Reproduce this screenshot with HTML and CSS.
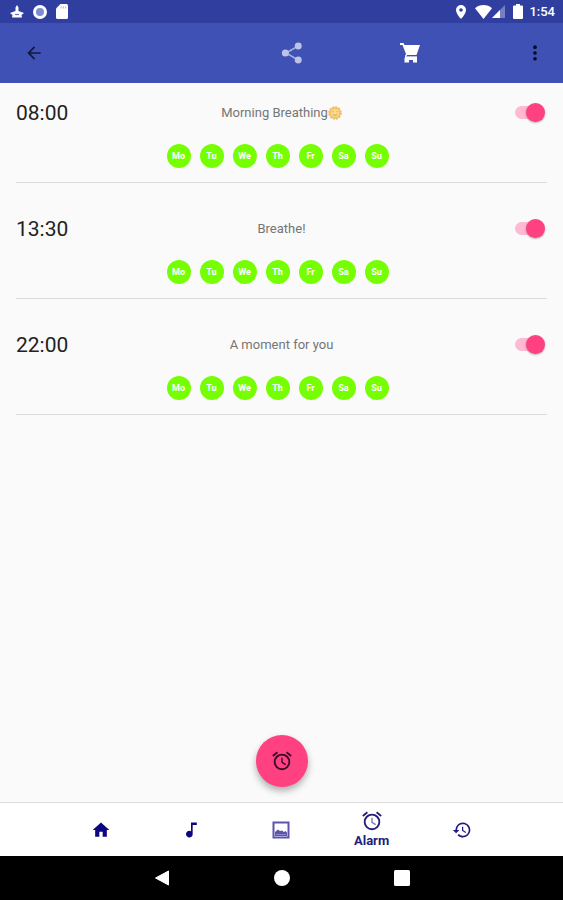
FILE: index.html
```html
<!DOCTYPE html>
<html lang="en">
<head>
    <meta charset="UTF-8">
    <meta name="viewport" content="width=device-width, initial-scale=1.0">
    <title>Alarm</title>
    <link rel="stylesheet" href="styles.css">
</head>
<body>
    <!-- Android status bar -->
    <div class="status-bar">
        <div class="status-group status-left">
            <svg width="14" height="14" viewBox="0 0 14 14" fill="#fff"><path d="M7 0l1.500 2.500v3.500l5.500 2-2.500 2 .5 2.500H2l.5-2.500L0 8l5.500-2V2.500z"/><path d="M5 9.500h4" stroke="#6874bd" stroke-width="1.200"/></svg>
            <svg width="16" height="16" viewBox="0 0 16 16"><circle cx="8" cy="8" r="5.500" fill="#7f8bcb" stroke="#fff" stroke-width="3"/></svg>
            <svg width="12" height="15" viewBox="0 0 12 15"><path d="M4.500 0H10.500Q12 0 12 1.500V13.500Q12 15 10.500 15H1.500Q0 15 0 13.500V4.500z" fill="#fff"/><path d="M5 2.500v2M7.300 2.500v2M9.600 2.500v2" stroke="#a9b0dc"/></svg>
        </div>
        <div class="status-group status-right">
            <svg width="10" height="14" viewBox="0 0 10 14"><path d="M5 0a5 5 0 0 0-5 5c0 3.700 5 9 5 9s5-5.300 5-9a5 5 0 0 0-5-5zm0 6.800a1.800 1.800 0 1 1 0-3.600 1.800 1.800 0 0 1 0 3.600z" fill="#fff"/></svg>
            <svg class="wifi" width="17" height="14" viewBox="0 0 17 14"><path d="M8.500 14L0 3.200C2.300 1.200 5.300 0 8.500 0S14.700 1.200 17 3.200z" fill="#fff"/></svg>
            <svg width="13" height="13" viewBox="0 0 13 13"><path d="M0 13L13 0v13z" fill="#7480c2"/><path d="M0 13l8-8v8z" fill="#fff"/></svg>
            <svg class="battery" width="10" height="15" viewBox="0 0 10 15"><path d="M3 0h4v1.500h2q1 0 1 1V14q0 1-1 1H1q-1 0-1-1V2.500q0-1 1-1h2z" fill="#fff"/></svg>
            <span class="clock">1:54</span>
        </div>
    </div>

    <header class="app-bar">
        <button class="icon-btn back" aria-label="Back">
            <svg width="20" height="20" viewBox="0 0 24 24"><path d="M20 11H7.830l5.590-5.590L12 4l-8 8 8 8 1.410-1.410L7.830 13H20z" fill="#11183f"/></svg>
        </button>
        <button class="icon-btn share" aria-label="Share">
            <svg width="22" height="22" viewBox="0 0 24 24"><path d="M18.500 4.500L5.500 12l13 7.500" fill="none" stroke="#a9b3dd" stroke-width="1.800"/><g fill="#bcc3e6"><circle cx="18.800" cy="4.300" r="3.800"/><circle cx="4.800" cy="12" r="3.900"/><circle cx="18.800" cy="19.700" r="3.800"/></g></svg>
        </button>
        <button class="icon-btn cart" aria-label="Shop">
            <svg width="20" height="20" viewBox="0 0 20 20"><path d="M0 0h3.500l1 2H20l-3.500 10H7L6.500 13.500H17V15H5V13l1-2L2.500 2H0z" fill="#fff"/><path d="M6 13.500h11" stroke="#b4bce4"/><path d="M4.500 15H17v4.500h-4V17H9v2.500H4.500z" fill="#fff"/></svg>
        </button>
        <button class="icon-btn more" aria-label="More options">
            <svg width="20" height="20" viewBox="0 0 24 24" fill="#080b20"><circle cx="12" cy="5" r="2.200"/><circle cx="12" cy="12" r="2.200"/><circle cx="12" cy="19" r="2.200"/></svg>
        </button>
    </header>

    <main>
        <ul class="alarms">
            <li class="alarm">
                <div class="alarm-row">
                    <time class="alarm-time">08:00</time>
                    <label class="alarm-name" for="alarm1">Morning Breathing<svg class="sun" width="14" height="14" viewBox="0 0 14 14"><circle cx="7" cy="7" r="5.800" fill="#f3c46c" stroke="#f0bd63" stroke-width="2" stroke-dasharray="2 1"/><circle cx="7" cy="7" r="4" fill="#fbda8c"/><path d="M5 5.200v1M9 5.200v1M4.800 8.500q2.200 2 4.400 0" fill="none" stroke="#c99a50" stroke-width=".9"/></svg></label>
                    <input type="checkbox" class="switch" id="alarm1" checked>
                </div>
                <div class="days">
                    <button class="day">Mo</button>
                    <button class="day">Tu</button>
                    <button class="day">We</button>
                    <button class="day">Th</button>
                    <button class="day">Fr</button>
                    <button class="day">Sa</button>
                    <button class="day">Su</button>
                </div>
            </li>
            <li class="alarm">
                <div class="alarm-row">
                    <time class="alarm-time">13:30</time>
                    <label class="alarm-name" for="alarm2">Breathe!</label>
                    <input type="checkbox" class="switch" id="alarm2" checked>
                </div>
                <div class="days">
                    <button class="day">Mo</button>
                    <button class="day">Tu</button>
                    <button class="day">We</button>
                    <button class="day">Th</button>
                    <button class="day">Fr</button>
                    <button class="day">Sa</button>
                    <button class="day">Su</button>
                </div>
            </li>
            <li class="alarm">
                <div class="alarm-row">
                    <time class="alarm-time">22:00</time>
                    <label class="alarm-name" for="alarm3">A moment for you</label>
                    <input type="checkbox" class="switch" id="alarm3" checked>
                </div>
                <div class="days">
                    <button class="day">Mo</button>
                    <button class="day">Tu</button>
                    <button class="day">We</button>
                    <button class="day">Th</button>
                    <button class="day">Fr</button>
                    <button class="day">Sa</button>
                    <button class="day">Su</button>
                </div>
            </li>
        </ul>

        <button class="fab" aria-label="Add alarm">
            <svg width="22" height="22" viewBox="0 0 24 24" fill="none" stroke="#3a0b26" stroke-width="2"><circle cx="12" cy="13" r="8"/><path d="M2 6.500l5-4M22 6.500l-5-4"/><path d="M12 8.500v5l4 2.500" stroke-width="1.500"/></svg>
        </button>
    </main>

    <nav class="tabs">
        <a href="#" class="tab" aria-label="Home">
            <svg width="20" height="20" viewBox="0 0 24 24"><path d="M10 20v-6h4v6h5v-8h3L12 3 2 12h3v8z" fill="#0c0680"/></svg>
        </a>
        <a href="#" class="tab" aria-label="Music">
            <svg width="20" height="20" viewBox="0 0 24 24"><path d="M12 3v10.550A4 4 0 1 0 14 17V6h5V3z" fill="#0c0680"/></svg>
        </a>
        <a href="#" class="tab" aria-label="Pictures">
            <svg width="18" height="18" viewBox="0 0 18 18"><path d="M1.500 1.500h15v15h-15z" fill="none" stroke="#5b55b0" stroke-width="2"/><path d="M3 15v-4l3-2.500 2 1.500 2-.5 2 1.500 1.500-1 1.500 1.500V15z" fill="#5b55b0"/><path d="M4 13.500h10" stroke="#8d89c9"/></svg>
        </a>
        <a href="#" class="tab active">
            <svg width="22" height="22" viewBox="0 0 24 24" fill="none" stroke="#241c7c" stroke-width="2"><circle cx="12" cy="13" r="8"/><path d="M2 6.500l5-4M22 6.500l-5-4"/><path d="M12 8.500v5l4 2.500" stroke="#7d79b5" stroke-width="1.500"/></svg>
            <span>Alarm</span>
        </a>
        <a href="#" class="tab" aria-label="History">
            <svg width="20" height="20" viewBox="0 0 24 24"><path d="M13 3a9 9 0 0 0-9 9H1l3.890 3.890.070.140L9 12H6a7 7 0 1 1 2.060 4.940l-1.420 1.420A9 9 0 1 0 13 3zm-1 5v5l4.280 2.540.720-1.210-3.500-2.080V8z" fill="#241c7c"/></svg>
        </a>
    </nav>

    <!-- Android navigation buttons -->
    <div class="system-nav">
        <button class="icon-btn" aria-label="System back">
            <svg width="16" height="16" viewBox="0 0 16 16"><path d="M14.500 1v14L1.500 8z" fill="#fff" stroke="#fff" stroke-linejoin="round"/></svg>
        </button>
        <button class="icon-btn" aria-label="System home">
            <svg width="16" height="16" viewBox="0 0 16 16"><circle cx="8" cy="8" r="8" fill="#fff"/></svg>
        </button>
        <button class="icon-btn" aria-label="Recent apps">
            <svg width="16" height="16" viewBox="0 0 16 16"><rect width="16" height="16" rx="1.500" fill="#fff"/></svg>
        </button>
    </div>
</body>
</html>
```
FILE: styles.css
```css
* {
    margin: 0;
    padding: 0;
    box-sizing: border-box;
}

body {
    display: flex;
    flex-direction: column;
    min-height: 100vh;
    background-color: #fafafa;
    color: #222;
    font-family: Roboto, Arial, sans-serif;
}

button {
    border: none;
    background: none;
    font-family: inherit;
    cursor: pointer;
}

svg {
    display: block;
}

.status-bar {
    display: flex;
    justify-content: space-between;
    align-items: center;
    height: 23px;
    padding: 0 8px 0 10px;
    background-color: #303f9f;
    color: #fff;
}

.status-group {
    display: flex;
    align-items: center;
}

.status-left {
    gap: 8px;
}

.wifi {
    margin-left: 9px;
}

.battery {
    margin: 0 6px 0 8px;
}

.clock {
    font-size: 13px;
    font-weight: 500;
    line-height: 24px;
}

.app-bar {
    display: grid;
    grid-template-columns: 68px 1fr 21% 21% 94px;
    align-items: center;
    height: 60px;
    background-color: #3f51b5;
}

.icon-btn {
    display: flex;
    justify-content: center;
    align-items: center;
    height: 44px;
}

.share {
    grid-column: 3;
}

.more {
    justify-content: flex-end;
    padding-right: 18px;
}

main {
    position: relative;
    flex: 1;
    padding: 0 16px 90px;
}

.alarms {
    display: flex;
    flex-direction: column;
    gap: 16px;
    list-style: none;
}

.alarm {
    height: 100px;
    padding-top: 16px;
    border-bottom: 1px solid #dcdcdc;
}

.alarm-row {
    display: grid;
    grid-template-columns: 80px 1fr 80px;
    align-items: center;
    height: 26px;
}

.alarm-time {
    font-size: 21px;
    line-height: 28px;
}

.alarm-name {
    display: flex;
    justify-content: center;
    align-items: center;
    color: #757575;
    font-size: 13px;
    line-height: 28px;
}

.switch {
    appearance: none;
    position: relative;
    justify-self: end;
    width: 30px;
    height: 20px;
    margin-right: 2px;
    cursor: pointer;
}

.switch::before {
    content: "";
    position: absolute;
    top: 3px;
    left: 0;
    width: 28px;
    height: 13px;
    border-radius: 7px;
    background-color: #c4c4c4;
}

.switch::after {
    content: "";
    position: absolute;
    top: 0;
    left: 0;
    width: 19px;
    height: 19px;
    border-radius: 50%;
    background-color: #f1f1f1;
    box-shadow: 0 1px 2px rgba(0, 0, 0, 0.3);
}

.switch:checked::before {
    background-color: #ffb9d2;
}

.switch:checked::after {
    left: 11px;
    background-color: #ff4081;
}

.days {
    display: flex;
    justify-content: center;
    gap: 9px;
    margin-top: 19px;
    padding-right: 8px;
}

.day {
    width: 24px;
    height: 24px;
    border-radius: 50%;
    background-color: #76ff03;
    color: #fff;
    font-size: 9px;
    font-weight: bold;
    line-height: 24px;
    text-align: center;
}

.fab {
    position: absolute;
    bottom: 15px;
    left: 50%;
    display: flex;
    justify-content: center;
    align-items: center;
    width: 52px;
    height: 52px;
    margin-left: -26px;
    border-radius: 50%;
    background-color: #ff4081;
    box-shadow: 0 4px 7px rgba(0, 0, 0, 0.3);
}

.tabs {
    display: grid;
    grid-template-columns: repeat(5, 1fr);
    height: 54px;
    padding: 0 10%;
    border-top: 1px solid #dcdcdc;
    background-color: #fff;
}

.tab {
    display: flex;
    flex-direction: column;
    justify-content: center;
    align-items: center;
    color: #241c7c;
    font-size: 13px;
    font-weight: bold;
    line-height: 18px;
    text-decoration: none;
}

.system-nav {
    display: flex;
    justify-content: center;
    align-items: center;
    gap: 60px;
    height: 44px;
    background-color: #000;
}

.system-nav .icon-btn {
    width: 60px;
}
```
